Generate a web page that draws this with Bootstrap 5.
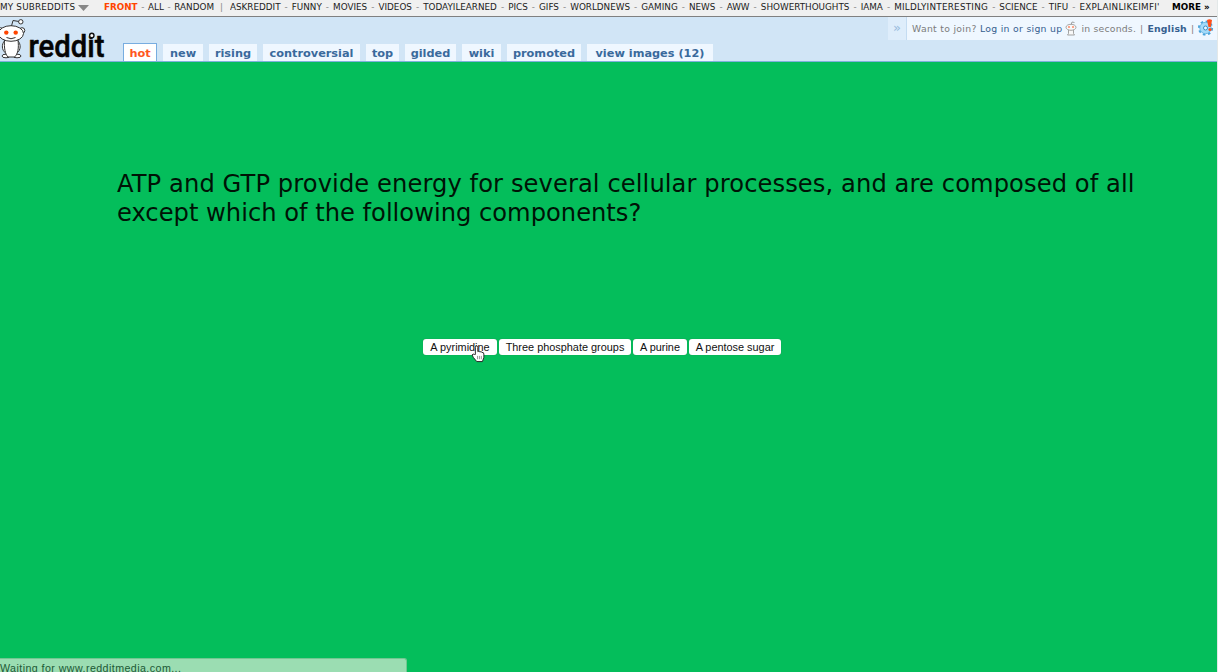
<!DOCTYPE html>
<html lang="en">
<head>
<meta charset="utf-8">
<meta name="viewport" content="width=device-width, initial-scale=1">
<title>reddit</title>
<link href="https://cdn.jsdelivr.net/npm/bootstrap@5.3.0/dist/css/bootstrap.min.css" rel="stylesheet">
<style>
body{width:1218px;height:672px;overflow:hidden;background:#e3e8e8;font-family:"DejaVu Sans",Verdana,sans-serif;font-size:9px;padding-right:1px}
a{text-decoration:none;color:inherit}
.srbar{height:17px;background:#f0f0f0;border-bottom:1px solid #808080;line-height:15px;font-size:8.8px;color:#222;white-space:nowrap}
.srbar i{font-style:normal;color:#888}
.mysubs{width:74px;letter-spacing:.2px}
.drop{width:11px;height:6px;margin:5px 0 0 4px}
.main-srs{width:110px;margin-left:15px}
.front{color:#ff4500;font-weight:bold}
.divider{margin-left:6px}
.subs{width:930px;margin-left:7px;overflow:hidden}
.wide{letter-spacing:.25px}
.more{font-weight:bold;margin-left:12px;color:#000}
.top-head{height:45px;background:#d1e5f6;border-bottom:1px solid #7fb0dc}
.logo{width:107px;height:44px}
.wordmark{font:500 32px Roboto,"Liberation Sans",sans-serif;fill:#050505;stroke:#050505;stroke-width:.5px}
.tabs{display:grid;grid-template-columns:34px 40px 48px 97px 33px 51px 39px 74px 126px;column-gap:6px;align-items:end;margin-left:16px;font-size:11.3px;font-weight:bold;color:#3a6a9c;line-height:17px;text-align:center;white-space:nowrap}
.tabs a{background:#eff7ff;height:17px;padding-top:1px}
.tabs .selected{height:18px;background:#fff;color:#ff5722;border:1px solid #78ade0;border-bottom:0;padding-top:1px}
.user{width:329px;height:23px;background:#eff7ff;line-height:23px;color:#7c7c7c;font-size:9.3px;letter-spacing:.2px;white-space:nowrap}
.user a{color:#36608f}
.join{letter-spacing:.3px;margin-left:5px}
.alien{margin:4px 4px 0 3px}
.expand{width:19px;background:#deedfb;border-right:1px solid #c4dcf2;color:#98bbdd!important;font-size:13px;line-height:22px;text-align:center}
.stage{height:610px;background:#04be5b;color:#001306}
.question{font-size:24.2px;line-height:29px;padding:108px 0 0 117px;margin:0;white-space:nowrap}
.first-line{letter-spacing:.085px}
.answers{margin:111px 0 0 423px;gap:2px}
.answers .btn{--bs-btn-padding-x:0;--bs-btn-padding-y:0;--bs-btn-font-size:10.9px;--bs-btn-line-height:15px;--bs-btn-border-radius:3px;--bs-btn-bg:#fff;--bs-btn-color:#111;border:0;height:16px;font-family:"Liberation Sans",Arial,sans-serif;box-shadow:0 0 1px #287a48;white-space:nowrap}
.w1{width:74px}.w2{width:132px}.w3{width:54px}.w4{width:92px}
.pointer{left:471px;top:345px;width:14px;height:18px}
.status{left:0;bottom:0;width:407px;height:14px;background:#9bddb2;border-top:1px solid #72c791;border-right:1px solid #72c791;border-radius:0 3px 0 0;color:#1c5935;font:10.7px/18px "Liberation Sans",Arial,sans-serif;overflow:hidden;letter-spacing:.42px}
</style>
</head>
<body class="position-relative">
<nav class="srbar d-flex">
  <a class="mysubs" href="#">MY SUBREDDITS</a>
  <svg class="drop" viewBox="0 0 11 6"><path d="M0 0h11L5.500 6z" fill="#888"/></svg>
  <div class="main-srs d-flex justify-content-between"><a class="front" href="#">FRONT</a><i>-</i><a href="#">ALL</a><i>-</i><a href="#">RANDOM</a></div>
  <i class="divider">|</i>
  <div class="subs d-flex justify-content-between"><a href="#">ASKREDDIT</a><i>-</i><a href="#">FUNNY</a><i>-</i><a href="#">MOVIES</a><i>-</i><a href="#">VIDEOS</a><i>-</i><a href="#">TODAYILEARNED</a><i>-</i><a href="#">PICS</a><i>-</i><a href="#">GIFS</a><i>-</i><a href="#">WORLDNEWS</a><i>-</i><a href="#">GAMING</a><i>-</i><a href="#">NEWS</a><i>-</i><a href="#">AWW</a><i>-</i><a href="#">SHOWERTHOUGHTS</a><i>-</i><a href="#">IAMA</a><i>-</i><a class="wide" href="#">MILDLYINTERESTING</a><i>-</i><a href="#">SCIENCE</a><i>-</i><a href="#">TIFU</a><i>-</i><a class="wide" href="#">EXPLAINLIKEIMFI'</a></div>
  <a class="more" href="#">MORE »</a>
</nav>
<header class="top-head d-flex">
  <a href="#" aria-label="reddit"><svg class="logo d-block" viewBox="0 17 107 44">
    <g fill="#fff" stroke="#333" stroke-width="1">
      <path d="M11.500 26l1.500-5.500 6 1" fill="none"/><circle cx="20.800" cy="21.800" r="2.200"/>
      <circle cx="0.500" cy="30.500" r="2.800"/><circle cx="22" cy="30.500" r="2.800"/>
      <path d="M4.500 41c-3 3-3 9 1 12M18 41c3 3 3 9-1 12"/>
      <ellipse cx="6" cy="56" rx="4" ry="1.800"/><ellipse cx="17" cy="56" rx="4" ry="1.800"/>
      <path d="M4.500 40C4 48 5 54 8 57h6.500C18 54 19 48 18 40z"/>
      <ellipse cx="11" cy="33.500" rx="12.500" ry="7.800"/>
      <path d="M6.500 37.500q4.500 2.500 9 0" fill="none"/>
    </g>
    <circle cx="6.300" cy="32.600" r="2.200" fill="#ff4500"/><circle cx="15.700" cy="32.600" r="2.200" fill="#ff4500"/>
    <text class="wordmark" x="28.500" y="57" textLength="76" lengthAdjust="spacingAndGlyphs">reddit</text>
    <circle cx="91.800" cy="35.500" r="2.200" fill="#fff" stroke="#111" stroke-width="1.400"/>
  </svg></a>
  <nav class="tabs align-self-end"><a class="selected" href="#">hot</a><a href="#">new</a><a href="#">rising</a><a href="#">controversial</a><a href="#">top</a><a href="#">gilded</a><a href="#">wiki</a><a href="#">promoted</a><a href="#">view images (12)</a></nav>
  <div class="user d-flex ms-auto">
    <a class="expand" href="#">»</a>
    <span class="join">Want to join? <a href="#">Log in or sign up</a></span>
    <svg class="alien" width="12" height="15" viewBox="0 0 12 15"><g fill="#f8f8f8" stroke="#999" stroke-width=".9"><path d="M6 4l1-3 2.500.5" fill="none"/><path d="M3.500 8h5v4.500l1 1.500h-7l1-1.500z"/><ellipse cx="6" cy="6.300" rx="5" ry="3"/></g><circle cx="4" cy="6" r="1" fill="#f86"/><circle cx="8" cy="6" r="1" fill="#f86"/></svg>
    <span>in seconds.</span><span class="px-1">|</span><a class="fw-bold" href="#">English</a><span class="px-1">|</span>
    <svg width="17" height="18" viewBox="0 0 17 18" style="margin-top:2px"><circle cx="7.500" cy="9" r="6.600" fill="none" stroke="#4aa3da" stroke-width="2" stroke-dasharray="2.600 2.580"/><circle cx="7.500" cy="9" r="5.700" fill="#a4daf8" stroke="#5bafe0" stroke-width=".8"/><circle cx="7.500" cy="9" r="2" fill="#eff7ff" stroke="#3b8dc4"/><path d="M9 1q2.500-1.500 5 0l-1.200 7h-2.300z" fill="#ff4f1a"/><circle cx="12" cy="10.500" r="1.600" fill="#ff4f1a"/></svg>
  </div>
</header>
<main class="stage">
  <h1 class="question fw-normal"><span class="first-line">ATP and GTP provide energy for several cellular processes, and are composed of all</span><br>except which of the following components?</h1>
  <div class="answers d-flex"><button class="btn w1">A pyrimidine</button><button class="btn w2">Three phosphate groups</button><button class="btn w3">A purine</button><button class="btn w4">A pentose sugar</button></div>
</main>
<svg class="pointer position-absolute" viewBox="0 0 14 19"><path d="M4.200 10V2.500q0-1.500 1.200-1.500t1.400 1.500V7q1.200-1 2.200.3 1.400-.8 2.200.5 2-.2 2 1.700v3.500l-1.500 4.500h-6L2 13 .8 10.500q.7-1.800 2.400-.5z" fill="#fff" stroke="#222"/><path d="M6.500 11.500v3.500M8.500 11.500v3.500M10.500 11.500v3.500" stroke="#777" stroke-width=".8"/></svg>
<div class="status position-absolute">Waiting for www.redditmedia.com...</div>
<script src="https://cdn.jsdelivr.net/npm/bootstrap@5.3.0/dist/js/bootstrap.bundle.min.js"></script>
</body>
</html>
